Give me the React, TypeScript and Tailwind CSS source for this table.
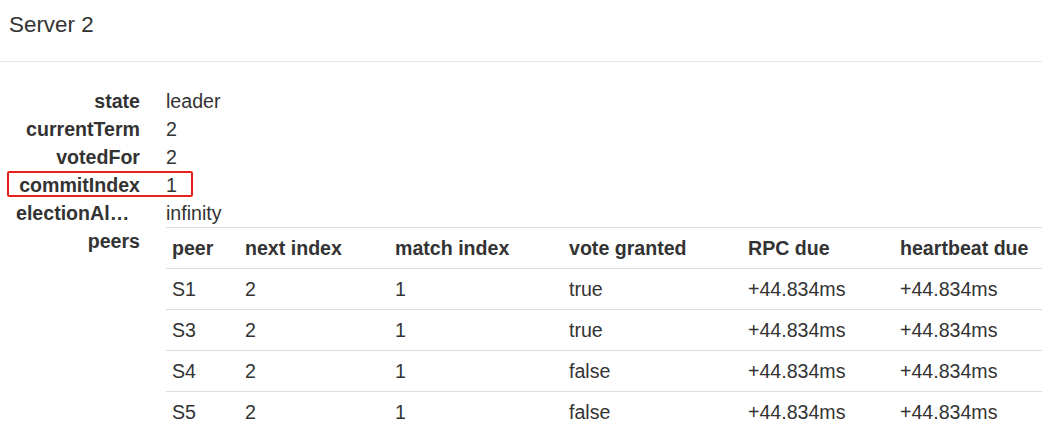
const fields: [string, string][] = [
  ["state", "leader"],
  ["currentTerm", "2"],
  ["votedFor", "2"],
  ["commitIndex", "1"],
  ["electionAlarm", "infinity"],
]

const cols = [
  { label: "peer", w: "w-[73px]" },
  { label: "next index", w: "w-[150px]" },
  { label: "match index", w: "w-[174px]" },
  { label: "vote granted", w: "w-[179px]" },
  { label: "RPC due", w: "w-[152px]" },
  { label: "heartbeat due", w: "" },
]

const peers = [
  ["S1", "2", "1", "true", "+44.834ms", "+44.834ms"],
  ["S3", "2", "1", "true", "+44.834ms", "+44.834ms"],
  ["S4", "2", "1", "false", "+44.834ms", "+44.834ms"],
  ["S5", "2", "1", "false", "+44.834ms", "+44.834ms"],
]

export default function App() {
  return (
    <div className="relative h-[431px] w-[1042px] overflow-hidden bg-white text-[#333] font-['Liberation_Sans',Arial,sans-serif]">
      <div className="h-[62px] border-b border-[#e5e5e5] px-[9px] pt-[11px]">
        <h4 className="text-[22.4px] leading-[28px]">Server 2</h4>
      </div>

      <div className="pt-[25px] pl-[16px] text-[19.6px] leading-[28px]">
        <dl className="grid grid-cols-[124px_1fr] gap-x-[26px]">
          {fields.map(([k, v]) => (
            <div key={k} className="contents">
              <dt className="truncate text-right font-bold">{k}</dt>
              <dd>{v}</dd>
            </div>
          ))}
          <dt className="text-right font-bold">peers</dt>
          <dd>
            <table className="w-[876px] table-fixed border-collapse">
              <thead>
                <tr>
                  {cols.map((c) => (
                    <th key={c.label} className={`${c.w} border-t border-[#ddd] px-[6px] py-[6px] text-left font-bold whitespace-nowrap`}>
                      {c.label}
                    </th>
                  ))}
                </tr>
              </thead>
              <tbody>
                {peers.map((row) => (
                  <tr key={row[0]}>
                    {row.map((cell, i) => (
                      <td key={i} className="border-t border-[#ddd] px-[6px] py-[6px] whitespace-nowrap">
                        {cell}
                      </td>
                    ))}
                  </tr>
                ))}
              </tbody>
            </table>
          </dd>
        </dl>
      </div>

      {/* highlight box */}
      <div className="absolute left-[7px] top-[171px] h-[26px] w-[186px] rounded-[2px] border-2 border-[#e8211c]" />
    </div>
  )
}
